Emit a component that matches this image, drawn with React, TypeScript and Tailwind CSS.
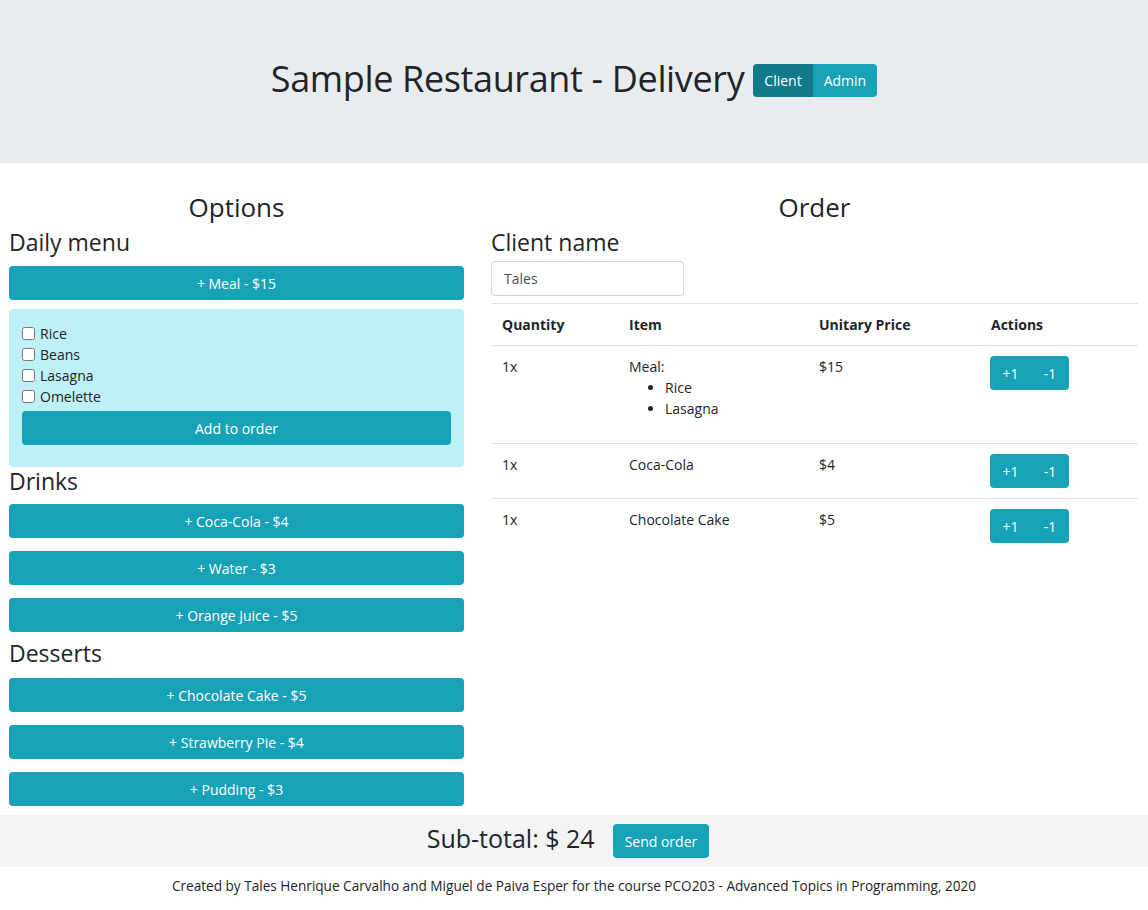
const drinks = ['+ Coca-Cola - $4', '+ Water - $3', '+ Orange Juice - $5'];
const desserts = ['+ Chocolate Cake - $5', '+ Strawberry Pie - $4', '+ Pudding - $3'];
const sides = ['Rice', 'Beans', 'Lasagna', 'Omelette'];

function WideButton({ label }: { label: string }) {
  return (
    <button className="w-full h-[34px] rounded-[4px] bg-[#17a2b8] text-white text-[14px] leading-[21px]">
      {label}
    </button>
  );
}

function StepButtons() {
  return (
    <div className="flex">
      <button className="h-[34px] w-[41px] rounded-l-[4px] bg-[#17a2b8] text-white text-[14px]">+1</button>
      <button className="h-[34px] w-[38px] rounded-r-[4px] bg-[#17a2b8] text-white text-[14px]">-1</button>
    </div>
  );
}

const orders = [
  { qty: '1x', item: 'Meal:', sides: ['Rice', 'Lasagna'], price: '$15' },
  { qty: '1x', item: 'Coca-Cola', sides: [], price: '$4' },
  { qty: '1x', item: 'Chocolate Cake', sides: [], price: '$5' },
];

export default function App() {
  return (
    <div className="min-h-[910px] bg-white text-[#212529] font-['Segoe_UI','Open_Sans',sans-serif] text-[14px] leading-[21px]">
      {/* header */}
      <header className="h-[163px] bg-[#e9ecef] flex items-center justify-center gap-[9px] pb-[6px]">
        <h1 className="text-[36px] leading-[43px] font-medium tracking-[-0.01em]">Sample Restaurant - Delivery</h1>
        <div className="flex mt-[4px]">
          <button className="h-[33px] px-[11px] rounded-l-[4px] bg-[#117a8b] text-white text-[14px]">Client</button>
          <button className="h-[33px] px-[11px] rounded-r-[4px] bg-[#17a2b8] text-white text-[14px]">Admin</button>
        </div>
      </header>

      <main className="flex pt-[29px]">
        {/* options */}
        <section className="w-[455px] ml-[9px] flex flex-col">
          <h2 className="text-center text-[26px] leading-[31px] font-medium">Options</h2>
          <h3 className="mt-[5px] mb-[9px] text-[23px] leading-[29px] font-medium">Daily menu</h3>
          <WideButton label="+ Meal - $15" />
          <div className="mt-[9px] rounded-[4px] bg-[#bef0f7] pt-[14px] px-[13px] pb-[22px]">
            {sides.map((s) => (
              <label key={s} className="flex items-center gap-[5px] h-[21px]">
                <input type="checkbox" className="m-0 w-[13px] h-[13px]" />
                <span>{s}</span>
              </label>
            ))}
            <div className="mt-[4px]">
              <WideButton label="Add to order" />
            </div>
          </div>
          <h3 className="mb-[8px] text-[23px] leading-[29px] font-medium">Drinks</h3>
          <div className="flex flex-col gap-[13px]">
            {drinks.map((d) => (
              <WideButton key={d} label={d} />
            ))}
          </div>
          <h3 className="mt-[7px] mb-[10px] text-[23px] leading-[29px] font-medium">Desserts</h3>
          <div className="flex flex-col gap-[13px]">
            {desserts.map((d) => (
              <WideButton key={d} label={d} />
            ))}
          </div>
        </section>

        {/* order */}
        <section className="w-[647px] ml-[27px] flex flex-col">
          <h2 className="text-center text-[26px] leading-[31px] font-medium">Order</h2>
          <h3 className="mt-[5px] text-[23px] leading-[29px] font-medium">Client name</h3>
          <input
            defaultValue="Tales"
            className="mt-[4px] w-[193px] h-[35px] px-[12px] rounded-[4px] border border-[#ced4da] text-[#495057] text-[14px] outline-none"
          />
          <table className="mt-[7px] w-full border-collapse text-left">
            <thead>
              <tr className="border-t border-b border-[#dee2e6]">
                <th className="w-[127px] px-[11px] py-[10px] font-bold">Quantity</th>
                <th className="w-[190px] px-[11px] py-[10px] font-bold">Item</th>
                <th className="w-[172px] px-[11px] py-[10px] font-bold">Unitary Price</th>
                <th className="px-[11px] py-[10px] font-bold">Actions</th>
              </tr>
            </thead>
            <tbody>
              {orders.map((o, i) => (
                <tr key={o.item} className={i < orders.length - 1 ? 'border-b border-[#dee2e6] align-top' : 'align-top'}>
                  <td className="px-[11px] py-[10px]">{o.qty}</td>
                  <td className="px-[11px] py-[10px]">
                    {o.item}
                    {o.sides.length > 0 && (
                      <ul className="list-disc pl-[36px] mb-[14px]">
                        {o.sides.map((s) => (
                          <li key={s}>{s}</li>
                        ))}
                      </ul>
                    )}
                  </td>
                  <td className="px-[11px] py-[10px]">{o.price}</td>
                  <td className="px-[10px] py-[10px]">
                    <StepButtons />
                  </td>
                </tr>
              ))}
            </tbody>
          </table>
        </section>
      </main>

      {/* totals */}
      <div className="mt-[9px] h-[52px] bg-[#f4f4f4] flex items-center justify-center gap-[18px] pr-[12px]">
        <span className="mb-[6px] text-[25px] leading-[29px] font-medium">Sub-total: $ 24</span>
        <button className="h-[34px] px-[12px] rounded-[4px] bg-[#17a2b8] text-white text-[14px]">Send order</button>
      </div>

      <footer className="pt-[8px] pb-[14px] text-center text-[13.6px] leading-[21px]">
        Created by Tales Henrique Carvalho and Miguel de Paiva Esper for the course PCO203 - Advanced Topics in Programming, 2020
      </footer>
    </div>
  );
}
